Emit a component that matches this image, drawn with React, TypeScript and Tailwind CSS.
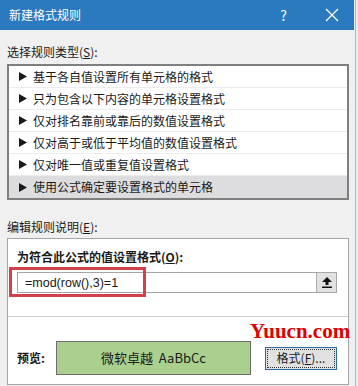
import React from "react";

const font = { fontFamily: '"Noto Sans CJK SC", "Noto Sans", sans-serif' };

const rows = [
  "基于各自值设置所有单元格的格式",
  "只为包含以下内容的单元格设置格式",
  "仅对排名靠前或靠后的数值设置格式",
  "仅对高于或低于平均值的数值设置格式",
  "仅对唯一值或重复值设置格式",
  "使用公式确定要设置格式的单元格",
];

function Tri() {
  return (
    <svg width="8" height="9" viewBox="0 0 8 9" className="shrink-0">
      <polygon points="0,0 8,4.5 0,9" fill="#1a1a1a" />
    </svg>
  );
}

export default function App() {
  return (
    <div className="flex w-[358px] h-[386px] overflow-hidden bg-[#f0f0f0] text-[#1a1a1a]" style={font}>
      <div className="flex flex-col w-[354px] h-full">
        {/* title bar */}
        <div className="flex items-center h-[30px] bg-[#2b7abf] text-white shrink-0">
          <span className="pl-[9px] text-[12px] leading-[16px]">新建格式规则</span>
          <span className="ml-auto mr-[38px] text-[14px] leading-[16px]">?</span>
          <svg width="14" height="14" viewBox="0 0 14 14" className="mr-[15px]">
            <path d="M1 1 L13 13 M13 1 L1 13" stroke="white" strokeWidth="1.3" />
          </svg>
        </div>
        <div className="flex flex-col px-[7px]">
          <div className="mt-[14px] h-[16px] text-[12px] leading-[16px]">
            选择规则类型(<span className="underline">S</span>):
          </div>
          <div className="mt-[4px] w-[342px] border-2 border-[#7f7f7f] bg-white">
            {rows.map((r, i) => (
              <div
                key={i}
                className={
                  "flex items-center gap-[6px] pl-[10px] h-[22px] text-[12px] leading-[16px] " +
                  (i === 5 ? "bg-[#dddde0]" : "border-b border-[#ececec]")
                }
              >
                <Tri />
                <span>{r}</span>
              </div>
            ))}
          </div>
          <div className="mt-[19px] h-[16px] text-[12px] leading-[16px]">
            编辑规则说明(<span className="underline">E</span>):
          </div>
          <div className="relative mt-[3px] w-[342px] h-[147px] border border-[#a5a5a5] bg-white flex flex-col">
            <div className="px-[9px] pt-[10px]">
              <div className="h-[16px] text-[12px] leading-[16px] font-bold">
                为符合此公式的值设置格式(<span className="underline">O</span>):
              </div>
              <div className="mt-[7px] flex w-[320px] h-[21px] border border-[#a5a5a5]">
                <div
                  className="flex-1 flex items-center pl-[7px] text-[12.5px] leading-[18px]"
                  style={{ fontFamily: '"Liberation Sans", sans-serif' }}
                >
                  =mod(row(),3)=1
                </div>
                <div className="w-[20px] h-full bg-[#e1e1e1] border-l border-[#adadad] flex items-center justify-center">
                  <svg width="10" height="11" viewBox="0 0 10 11">
                    <polygon points="5,0 10,5 6.5,5 6.5,8 3.5,8 3.5,5 0,5" fill="#111" />
                    <rect x="0" y="9.5" width="10" height="1.5" fill="#111" />
                  </svg>
                </div>
              </div>
            </div>
            <div className="mt-[23px] h-px bg-[#d0d0d0]" />
            <div className="flex items-center px-[9px] mt-[24px]">
              <span className="text-[12px] leading-[16px] font-bold w-[39px]">预览:</span>
              <div className="w-[195px] h-[34px] bg-[#a9d08e] border border-[#6d6d6d] flex items-center justify-center text-[13px] leading-[18px]">
                微软卓越&nbsp;&nbsp;AaBbCc
              </div>
              <div className="ml-[14px] w-[72px] h-[23px] border border-[#2a6aa6] bg-[#e1e1e1] p-[1px]">
                <div className="w-full h-full border border-dotted border-[#333] flex items-center justify-center text-[12px] leading-[16px]">
                  格式(<span className="underline">F</span>)...
                </div>
              </div>
            </div>
            {/* red highlight annotation */}
            <div className="absolute left-[1px] top-[28px] w-[137px] h-[30px] border-[3px] border-[#d2404c]" />
            {/* watermark */}
            <div
              className="absolute left-[242px] top-[81px] text-[21px] leading-[22px] font-bold text-[#e00000]"
              style={{ fontFamily: '"Liberation Serif", serif' }}
            >
              Yuucn.com
            </div>
          </div>
        </div>
      </div>
      <div className="flex w-[4px] h-full bg-[#e6edf3]">
        <div className="w-[1px] h-full bg-[#9dc0dc] ml-[1px]" />
      </div>
    </div>
  );
}
